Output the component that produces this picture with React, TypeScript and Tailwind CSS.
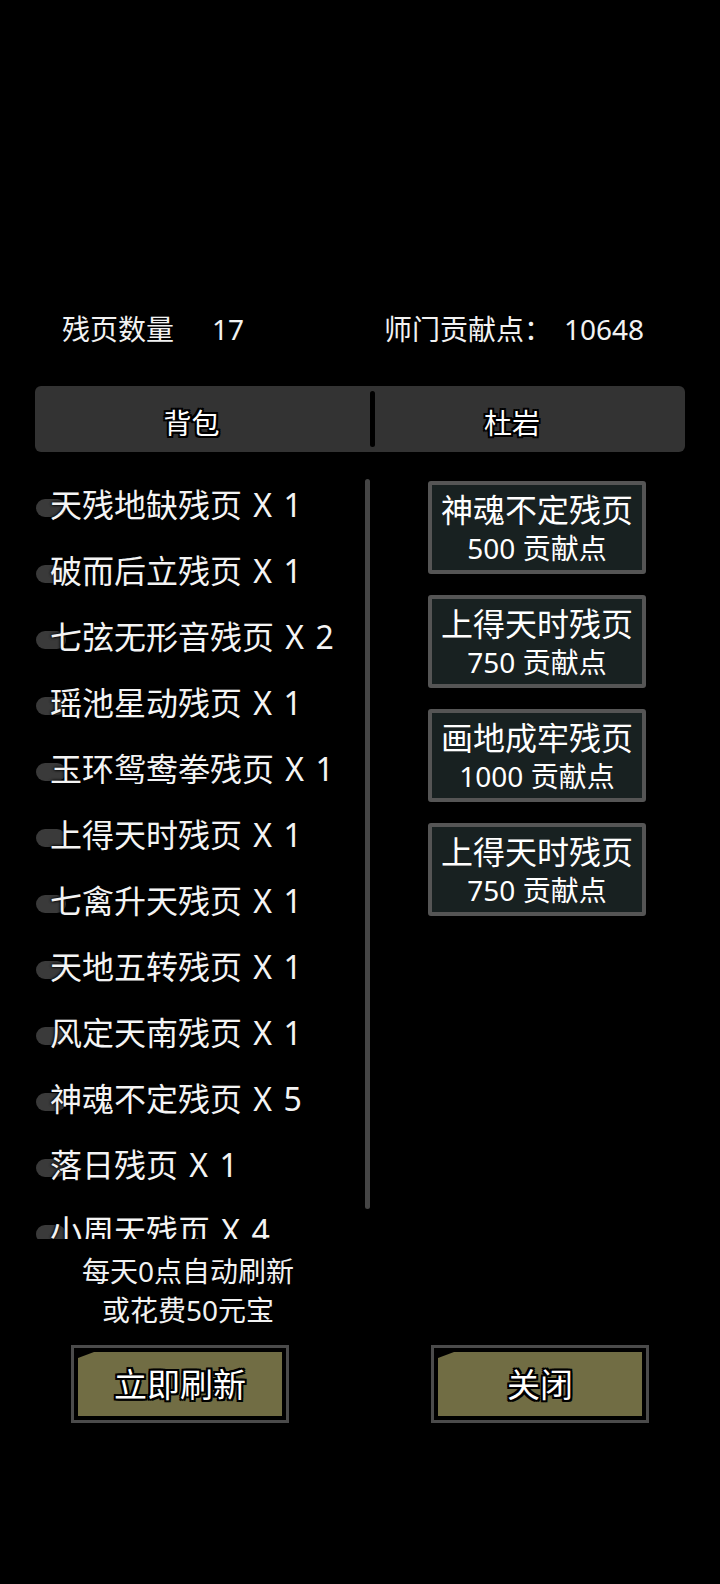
import React from "react";

const items = [
  "天残地缺残页 X 1",
  "破而后立残页 X 1",
  "七弦无形音残页 X 2",
  "瑶池星动残页 X 1",
  "玉环鸳鸯拳残页 X 1",
  "上得天时残页 X 1",
  "七禽升天残页 X 1",
  "天地五转残页 X 1",
  "风定天南残页 X 1",
  "神魂不定残页 X 5",
  "落日残页 X 1",
  "小周天残页 X 4",
];

const shop = [
  { name: "神魂不定残页", cost: "500 贡献点" },
  { name: "上得天时残页", cost: "750 贡献点" },
  { name: "画地成牢残页", cost: "1000 贡献点" },
  { name: "上得天时残页", cost: "750 贡献点" },
];

const outline =
  "[text-shadow:-2px_0_#000,2px_0_#000,0_-2px_#000,0_2px_#000,-2px_-2px_#000,2px_2px_#000,-2px_2px_#000,2px_-2px_#000]";

function ActionButton({ label }: { label: string }) {
  return (
    <div className="w-[218px] h-[78px] border-[3px] border-[#4b4b4b] bg-black p-[4px]">
      <div className="h-full bg-[#716d44] flex items-center justify-center [clip-path:polygon(16px_0,100%_0,100%_100%,0_100%,0_6px)]">
        <span className={`text-white text-[33px] leading-none ${outline}`}>{label}</span>
      </div>
    </div>
  );
}

export default function App() {
  return (
    <div className="w-[720px] h-[1584px] bg-black text-white overflow-hidden font-['Noto_Sans','Noto_Sans_CJK_SC',sans-serif]">
      {/* header */}
      <div className="pt-[309px] h-[349px] flex items-center text-[28px] leading-[40px] text-[#f2f2f2]">
        <div className="ml-[62px] flex w-[322px]">
          <span>残页数量</span>
          <span className="ml-[38px]">17</span>
        </div>
        <div className="flex">
          <span>师门贡献点：</span>
          <span className="ml-[12px]">10648</span>
        </div>
      </div>

      {/* tabs */}
      <div className="mt-[37px] mx-[35px] h-[66px] bg-[#333333] rounded-[6px] flex items-center">
        <div className={`w-[335px] pr-[22px] text-center text-[28px] leading-none pt-[8px] ${outline}`}>背包</div>
        <div className="w-[5px] h-[56px] bg-black rounded-full"></div>
        <div className={`flex-1 text-center text-[28px] leading-none pt-[8px] pr-[36px] ${outline}`}>杜岩</div>
      </div>

      {/* main */}
      <div className="mt-[20px] flex">
        <div className="relative ml-[36px] w-[338px] h-[767px] overflow-hidden">
          {items.map((t, i) => (
            <div key={i} className="relative h-[66px] flex items-center">
              <span className="absolute left-0 top-[27px] w-[30px] h-[18px] rounded-full bg-[#3a3a3a]"></span>
              <span className="relative ml-[14px] text-[32px] leading-none text-[#f4f4f4] [word-spacing:3px] [text-shadow:0_0_3px_#000,0_0_3px_#000]">
                {t}
              </span>
            </div>
          ))}
          <div className="absolute left-[329px] top-[7px] w-[5px] h-[730px] rounded-full bg-[#454545]"></div>
        </div>

        <div className="ml-[54px] pt-[9px] flex flex-col gap-[21px]">
          {shop.map((s, i) => (
            <div
              key={i}
              className="w-[218px] h-[93px] border-[4px] border-[#555555] rounded-[3px] bg-[#182121] flex flex-col items-center justify-center"
            >
              <span className="text-[32px] leading-[40px] text-white">{s.name}</span>
              <span className="text-[28px] leading-[36px] text-white">{s.cost}</span>
            </div>
          ))}
        </div>
      </div>

      {/* refresh info */}
      <div className="mt-[13px] w-[376px] text-center text-[28px] leading-[39px] text-[#f2f2f2]">
        <div>每天0点自动刷新</div>
        <div>或花费50元宝</div>
      </div>

      {/* buttons */}
      <div className="mt-[15px] flex pl-[71px] gap-[142px]">
        <ActionButton label="立即刷新" />
        <ActionButton label="关闭" />
      </div>
    </div>
  );
}
